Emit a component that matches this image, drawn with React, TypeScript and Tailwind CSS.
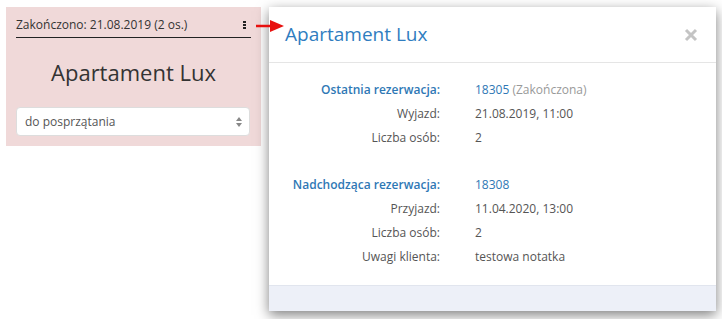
import React from 'react';

const font = { fontFamily: '"Open Sans", "Noto Sans", sans-serif' };

function Row({ label, children, head }: { label: string; children: React.ReactNode; head?: boolean }) {
  return (
    <div className="flex h-[24px] items-center whitespace-nowrap">
      <div className={head ? 'w-[155px] text-right font-semibold text-[#2f78b5]' : 'w-[155px] text-right text-[#555]'}>
        {label}
      </div>
      <div className="ml-[35px] text-[#555]">{children}</div>
    </div>
  );
}

export default function App() {
  return (
    <div className="relative h-[319px] w-[722px] bg-white" style={font}>
      <div className="flex items-start">
        {/* Room card */}
        <div className="ml-[6px] mt-[7px] h-[139px] w-[255px] bg-[#f0d9d9] px-[10px] pt-[9px]">
          <div className="flex h-[22px] items-center justify-between border-b border-[#222] pb-[3px] text-[12px] text-[#333]">
            <span>Zakończono: 21.08.2019 (2 os.)</span>
            <span className="mr-[5px] flex flex-col gap-[1px]">
              <i className="block h-[2px] w-[3px] bg-[#222]" />
              <i className="block h-[2px] w-[3px] bg-[#222]" />
              <i className="block h-[2px] w-[3px] bg-[#222]" />
            </span>
          </div>
          <div className="mt-[20px] text-center text-[22px] leading-[28px] text-[#333]">Apartament Lux</div>
          <div className="mt-[21px] flex h-[29px] w-[234px] items-center justify-between rounded-[4px] border border-[#ddd] bg-white pl-[8px] pr-[6px] text-[12px] text-[#555]">
            <span>do posprzątania</span>
            <svg width="8" height="12" viewBox="0 0 8 12">
              <path d="M4 1 L7 5 H1 Z" fill="#888" />
              <path d="M4 11 L7 7 H1 Z" fill="#888" />
            </svg>
          </div>
        </div>

        {/* Modal */}
        <div className="ml-[8px] mt-[7px] flex h-[304px] w-[447px] flex-col bg-white shadow-[0_4px_12px_rgba(0,0,0,0.5)]">
          <div className="flex h-[56px] items-center justify-between border-b border-[#e5e5e5] pl-[16px] pr-[18px]">
            <span className="text-[19px] text-[#2f7dc0]">Apartament Lux</span>
            <svg width="14" height="14" viewBox="0 0 14 14">
              <path d="M2 2 L12 12 M12 2 L2 12" stroke="#c4c4c4" strokeWidth="3" />
            </svg>
          </div>
          <div className="flex-1 pl-[16px] pt-[15px] text-[12px]">
            <Row label="Ostatnia rezerwacja:" head>
              <span className="text-[#2f78b5]">18305</span> <span className="text-[#999]">(Zakończona)</span>
            </Row>
            <Row label="Wyjazd:">21.08.2019, 11:00</Row>
            <Row label="Liczba osób:">2</Row>
            <div className="h-[23px]" />
            <Row label="Nadchodząca rezerwacja:" head>
              <span className="text-[#2f78b5]">18308</span>
            </Row>
            <Row label="Przyjazd:">11.04.2020, 13:00</Row>
            <Row label="Liczba osób:">2</Row>
            <Row label="Uwagi klienta:">testowa notatka</Row>
          </div>
          <div className="h-[26px] border-t border-[#e1e5ee] bg-[#edf0f8]" />
        </div>
      </div>

      {/* red pointer arrow */}
      <svg className="absolute left-[256px] top-[18px]" width="28" height="16" viewBox="0 0 28 16">
        <path d="M0 8 H16" stroke="#e8110f" strokeWidth="2.5" />
        <path d="M14 2 L28 8 L14 14 Z" fill="#e8110f" />
      </svg>
    </div>
  );
}
